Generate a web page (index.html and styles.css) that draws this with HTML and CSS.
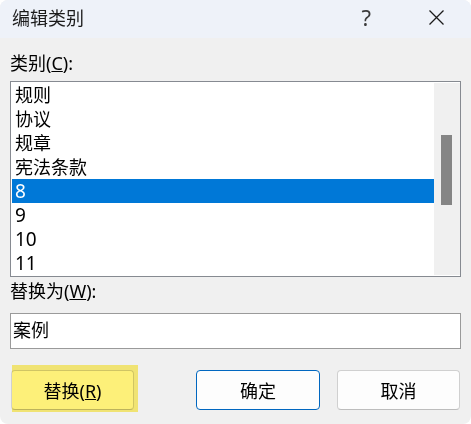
FILE: index.html
```html
<!DOCTYPE html>
<html lang="zh-CN">
<head>
    <meta charset="UTF-8">
    <title>编辑类别</title>
    <link rel="stylesheet" href="styles.css">
</head>
<body>

    <div class="dialog">
        <div class="titlebar">
            <span class="title">编辑类别</span>
            <span class="help">?</span>
            <svg class="close" width="15" height="15" viewBox="0 0 15 15">
                <path d="M0.5 0.5 L14.5 14.5 M14.5 0.5 L0.5 14.5" stroke="#1b1b1b" stroke-width="1.3" fill="none"/>
            </svg>
        </div>

        <div class="content">
            <label class="field-label">类别(<u>C</u>):</label>
            <div class="listbox">
                <ul class="items">
                    <li>规则</li>
                    <li>协议</li>
                    <li>规章</li>
                    <li>宪法条款</li>
                    <li class="num selected">8</li>
                    <li class="num">9</li>
                    <li class="num">10</li>
                    <li class="num">11</li>
                </ul>
                <div class="scrollbar"><div class="thumb"></div></div>
            </div>

            <label class="field-label second">替换为(<u>W</u>):</label>
            <div class="textbox">案例</div>

            <div class="buttons">
                <div class="hl"><button class="btn">替换(<u>R</u>)</button></div>
                <button class="btn default">确定</button>
                <button class="btn">取消</button>
            </div>
        </div>
    </div>

</body>
</html>
```

FILE: styles.css
```css
:root {
    --face: #f0f0f0;
    --title-bg: #eef2f9;
    --border: #868a91;
    --select: #0078d7;
    --accent: #0067c0;
}
body {
    margin: 0;
    background: #ffffff;
    font-family: "Noto Sans", "Noto Sans CJK SC", sans-serif;
    color: #000;
}
.dialog {
    width: 471px;
    height: 424px;
    background: var(--face);
    border-radius: 8px;
    overflow: hidden;
}
.titlebar {
    height: 38px;
    box-sizing: border-box;
    padding: 0 0 4px 12px;
    background: var(--title-bg);
    display: flex;
    align-items: center;
}
.title {
    font-size: 18px;
    color: #1b1b1b;
}
.help {
    margin-left: auto;
    margin-right: 58px;
    font-size: 22px;
    line-height: 24px;
    color: #3a3a3a;
}
.close {
    margin-right: 27px;
}
.content {
    padding: 13px 10px 0;
}
.field-label {
    display: block;
    font-size: 18px;
    line-height: 24px;
}
.field-label.second {
    margin-top: 2px;
}
.listbox {
    margin-top: 6px;
    width: 451px;
    height: 196px;
    box-sizing: border-box;
    border: 1px solid var(--border);
    padding: 1px 0 1px 1px;
    background: #fff;
    display: flex;
}
.items {
    list-style: none;
    margin: 0;
    padding: 0;
    flex: 1;
}
.items li {
    height: 24px;
    line-height: 24px;
    padding-left: 3px;
    font-size: 18px;
}
.items li.num {
    font-size: 19px;
}
.items li.selected {
    background: var(--select);
    color: #fff;
}
.scrollbar {
    width: 26px;
    background: var(--face);
    padding-top: 52px;
    box-sizing: border-box;
}
.thumb {
    margin-left: 7px;
    width: 11px;
    height: 70px;
    background: #858585;
}
.textbox {
    margin-top: 10px;
    height: 36px;
    box-sizing: border-box;
    border: 1px solid #9a9a9a;
    background: #fff;
    padding-left: 2px;
    font-size: 18px;
    line-height: 32px;
}
.buttons {
    margin-top: 21px;
    padding-right: 1px;
    display: flex;
}
.btn {
    width: 123px;
    height: 40px;
    box-sizing: border-box;
    border: 1px solid #d0d0d0;
    border-bottom-color: #bdbdbd;
    border-radius: 4px;
    background: #fdfdfd;
    font-family: inherit;
    font-size: 18px;
    color: #000;
    padding: 0;
}
.hl {
    position: relative;
    margin-left: 1px;
}
.hl::after {
    content: "";
    position: absolute;
    left: 1px;
    right: -4px;
    top: -5px;
    bottom: -2px;
    background: #fff27a;
    mix-blend-mode: multiply;
}
.btn.default {
    width: 124px;
    margin-left: auto;
    border-color: var(--accent);
}
.btn.default + .btn {
    margin-left: 17px;
}
```
